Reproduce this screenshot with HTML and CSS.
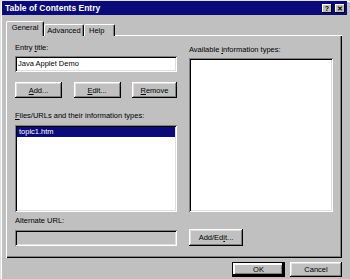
FILE: index.html
```html
<!DOCTYPE html>
<html lang="en">
<head>
    <meta charset="UTF-8">
    <title>Table of Contents Entry</title>
    <link rel="stylesheet" href="styles.css">
</head>
<body>
    <div class="window">
        <div class="titlebar">
            <span class="title">Table of Contents Entry</span>
            <div class="tb-buttons">
                <span class="tb-btn">?</span>
                <span class="tb-btn">&#x2715;</span>
            </div>
        </div>

        <div class="tabs">
            <div class="tab active">General</div>
            <div class="tab adv">Advanced</div>
            <div class="tab help">Help</div>
        </div>

        <div class="panel">
            <div class="col-left">
                <label class="lbl first">Entry <u>t</u>itle:</label>
                <div class="field">Java Applet Demo</div>

                <div class="btn-row">
                    <button class="btn"><u>A</u>dd...</button>
                    <button class="btn"><u>E</u>dit...</button>
                    <button class="btn"><u>R</u>emove</button>
                </div>

                <label class="lbl files"><u>F</u>iles/URLs and their information types:</label>
                <div class="list files-list">
                    <div class="row selected">topic1.htm</div>
                </div>

                <label class="lbl alt">Alternate URL:</label>
                <div class="field disabled"></div>
            </div>

            <div class="col-right">
                <label class="lbl first">Available <u>i</u>nformation types:</label>
                <div class="list types-list"></div>
                <button class="btn add-edit">Add/Ed<u>i</u>t...</button>
            </div>
        </div>

        <div class="footer">
            <button class="btn ok">OK</button>
            <button class="btn cancel">Cancel</button>
        </div>
    </div>
</body>
</html>
```

FILE: styles.css
```css
body { margin: 0; background: #c0c0c0; }
.window { width: 350px; height: 279px; background: #c0c0c0; font-family: "Liberation Sans", Arial, sans-serif; font-size: 7.5px; color: #000; overflow: hidden; box-shadow: inset 1px 1px #dfdfdf, inset 2px 2px #fff; }

.titlebar { display: flex; align-items: center; justify-content: space-between; height: 14px; margin: 1px 3px 0 2px; background: #0a0a78; }
.title { color: #fff; font-weight: bold; font-size: 8.5px; padding-left: 3px; }
.tb-buttons { display: flex; gap: 3px; margin-right: 2px; }
.tb-btn { width: 10px; height: 9px; background: #c0c0c0; font-size: 7px; font-weight: bold; line-height: 9px; text-align: center; box-shadow: inset -1px -1px #000, inset 1px 1px #fff; }

.tabs { display: flex; align-items: flex-end; height: 15px; margin: 6px 0 -1px 6px; }
.tab { height: 12px; line-height: 11px; padding: 0 1px; text-align: center; white-space: nowrap; background: #c0c0c0; border-top: 1px solid #fff; border-left: 1px solid #fff; border-right: 1px solid #000; border-radius: 2px 2px 0 0; box-sizing: border-box; box-shadow: inset -1px 0 #808080; }
.tab.active { position: relative; z-index: 1; width: 38px; height: 15px; line-height: 12px; }
.tab.adv { width: 40px; }
.tab.help { width: 31px; text-align: left; padding-left: 4px; }

.panel { display: grid; grid-template-columns: 162px 144px; column-gap: 12px; width: 336px; height: 223px; box-sizing: border-box; margin-left: 6px; padding: 8px 9px 0 9px; box-shadow: inset 1px 1px #fff, inset -1px -1px #000, inset -2px -2px #808080; }
.col-left, .col-right { display: flex; flex-direction: column; align-items: flex-start; }

.lbl { display: block; height: 10px; line-height: 10px; }
.col-right .lbl.first { margin-top: 2px; }
.files { margin-top: 13px; }
.alt { margin-top: 4px; }

.field { width: 162px; height: 16px; line-height: 16px; margin-top: 3px; padding-left: 3px; box-sizing: border-box; background: #fff; box-shadow: inset 1px 1px #808080, inset -1px -1px #fff, inset 2px 2px #000, inset -2px -2px #dfdfdf; }
.field.disabled { background: #c0c0c0; margin-top: 4px; }

.btn-row { display: flex; justify-content: space-between; width: 162px; margin-top: 10px; }
.btn { width: 47px; height: 16px; padding: 0; border: none; background: #c0c0c0; font: inherit; color: #000; box-shadow: inset -1px -1px #000, inset 1px 1px #fff, inset -2px -2px #808080, inset 2px 2px #dfdfdf; }
.btn-row .btn:last-child { width: 45px; }

.list { background: #fff; padding: 2px; box-sizing: border-box; box-shadow: inset 1px 1px #808080, inset -1px -1px #fff, inset 2px 2px #000, inset -2px -2px #dfdfdf; }
.files-list { width: 162px; height: 87px; margin-top: 4px; }
.types-list { width: 144px; height: 154px; margin-top: 3px; }
.row { height: 10px; line-height: 10px; padding-left: 2px; }
.row.selected { background: #0a0a78; color: #fff; }

.add-edit { width: 54px; height: 17px; margin-top: 17px; }

.footer { display: flex; justify-content: flex-end; gap: 5px; margin: 4px 8px 0 0; }
.ok { width: 53px; height: 15px; box-shadow: inset -2px -2px #000, inset 2px 2px #fff, inset -3px -3px #808080; border: 1px solid #000; }
.cancel { width: 52px; height: 15px; }
```
